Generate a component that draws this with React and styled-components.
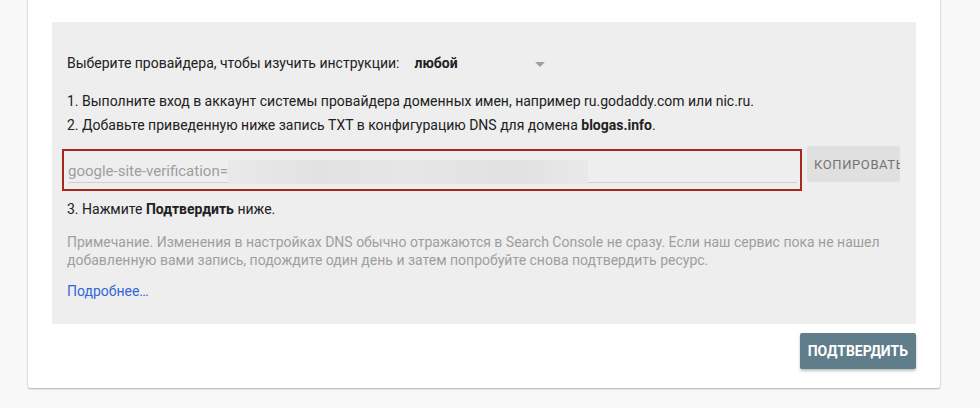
import styled, { createGlobalStyle } from "styled-components";

const GlobalStyle = createGlobalStyle`
    html, body {
        margin: 0;
        padding: 0;
        background: #f8f8f8;
        font-family: Roboto, "Noto Sans", sans-serif;
    }
`;

const Page = styled.div`
    height: 408px;
    padding: 0 40px 0 28px;
    box-sizing: border-box;
    overflow: hidden;
`;

const Card = styled.div`
    width: 912px;
    margin-top: -20px;
    padding: 42px 24px 19px;
    box-sizing: border-box;
    background: #fff;
    border-radius: 0 0 2px 2px;
    box-shadow: 0 1px 2px rgba(0, 0, 0, 0.3), 0 0 1px rgba(0, 0, 0, 0.15);
    display: flex;
    flex-direction: column;
`;

const Panel = styled.div`
    background: #eeeeee;
    padding: 31px 16px 23px 15px;
    display: flex;
    flex-direction: column;
    color: #212121;
    font-size: 14px;
`;

const ProviderRow = styled.div`
    display: flex;
    align-items: center;
    height: 20px;
`;

const Label = styled.span`
    color: #212121;
`;

const Select = styled.div`
    display: flex;
    align-items: center;
    justify-content: space-between;
    width: 131px;
    margin-left: 15px;
    font-weight: 700;
    padding-right: 4px;
`;

const Caret = styled.span`
    width: 0;
    height: 0;
    border-left: 5px solid transparent;
    border-right: 5px solid transparent;
    border-top: 5px solid #9e9e9e;
    margin-top: 2px;
`;

const Step = styled.p`
    margin: ${(p) => p.$top || 0}px 0 0;
    line-height: 20px;
    b {
        font-weight: 700;
    }
`;

const RecordRow = styled.div`
    display: flex;
    align-items: flex-start;
    margin-top: 14px;
    margin-left: -5px;
`;

const RecordBox = styled.div`
    width: 740px;
    height: 42px;
    box-sizing: border-box;
    border: 2px solid #a8271d;
    padding: 8px 3px 0 4px;
`;

const RecordField = styled.div`
    display: flex;
    align-items: center;
    height: 23px;
    border-bottom: 1px solid #cfcfcf;
    color: #9e9e9e;
    font-size: 15px;
`;

const Blurred = styled.span`
    display: block;
    width: 360px;
    height: 24px;
    margin-top: 2px;
    background: linear-gradient(
        90deg,
        #e9e9e9 0%,
        #e2e2e2 25%,
        #e6e6e6 50%,
        #e1e1e1 80%,
        #e9e9e9 100%
    );
`;

const CopyButton = styled.button`
    width: 93px;
    height: 36px;
    margin-left: 5px;
    margin-top: -3px;
    border: none;
    border-radius: 2px;
    background: #e0e0e0;
    color: #737373;
    font-family: Roboto, sans-serif;
    font-size: 13px;
    font-weight: 400;
    letter-spacing: 0.6px;
    padding: 0 0 0 7px;
    text-align: left;
    white-space: nowrap;
    overflow: hidden;
`;

const Note = styled.p`
    margin: 14px 0 0;
    color: #9e9e9e;
    line-height: 18px;
    font-size: 14px;
`;

const MoreLink = styled.a`
    display: block;
    margin-top: 12px;
    line-height: 20px;
    color: #3367d6;
    text-decoration: none;
`;

const Footer = styled.div`
    display: flex;
    justify-content: flex-end;
    margin-top: 9px;
`;

const ConfirmButton = styled.button`
    height: 36px;
    padding: 0 8px;
    min-width: 116px;
    border: none;
    border-radius: 2px;
    background: #607d8b;
    color: #fff;
    font-family: Roboto, sans-serif;
    font-size: 14px;
    font-weight: 700;
    box-shadow: 0 2px 3px rgba(0, 0, 0, 0.25);
`;

export default function App() {
    return (
        <>
            <GlobalStyle />
            <Page>
                <Card>
                    <Panel>
                        <ProviderRow>
                            <Label>Выберите провайдера, чтобы изучить инструкции:</Label>
                            <Select>
                                любой
                                <Caret />
                            </Select>
                        </ProviderRow>
                        <Step $top={18}>
                            1. Выполните вход в аккаунт системы провайдера доменных имен, например ru.godaddy.com или nic.ru.
                        </Step>
                        <Step $top={4}>
                            2. Добавьте приведенную ниже запись TXT в конфигурацию DNS для домена <b>blogas.info</b>.
                        </Step>
                        <RecordRow>
                            <RecordBox>
                                <RecordField>
                                    google-site-verification=
                                    <Blurred />
                                </RecordField>
                            </RecordBox>
                            <CopyButton>КОПИРОВАТЬ</CopyButton>
                        </RecordRow>
                        <Step $top={8}>
                            3. Нажмите <b>Подтвердить</b> ниже.
                        </Step>
                        <Note>
                            Примечание. Изменения в настройках DNS обычно отражаются в Search Console не сразу. Если наш сервис пока не нашел добавленную вами запись, подождите один день и затем попробуйте снова подтвердить ресурс.
                        </Note>
                        <MoreLink href="#">Подробнее…</MoreLink>
                    </Panel>
                    <Footer>
                        <ConfirmButton>ПОДТВЕРДИТЬ</ConfirmButton>
                    </Footer>
                </Card>
            </Page>
        </>
    );
}
